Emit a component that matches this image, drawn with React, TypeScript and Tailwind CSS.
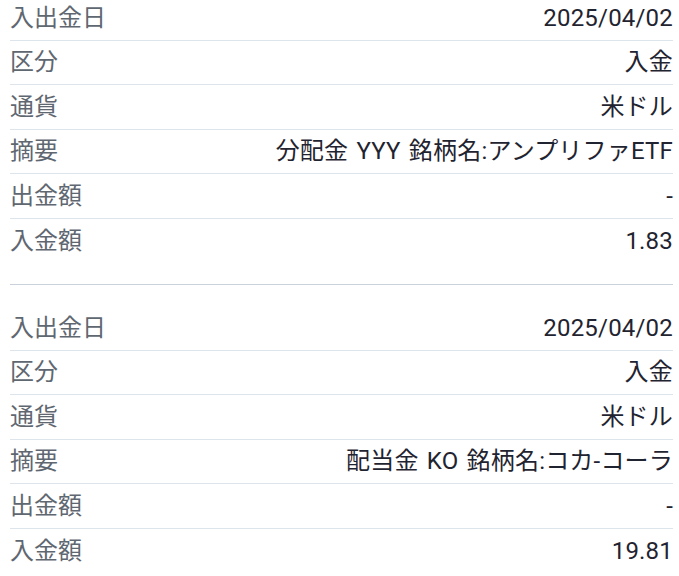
import React from "react";

type Row = { label: string; value: string };

const sections: Row[][] = [
  [
    { label: "入出金日", value: "2025/04/02" },
    { label: "区分", value: "入金" },
    { label: "通貨", value: "米ドル" },
    { label: "摘要", value: "分配金 YYY 銘柄名:アンプリファETF" },
    { label: "出金額", value: "-" },
    { label: "入金額", value: "1.83" },
  ],
  [
    { label: "入出金日", value: "2025/04/02" },
    { label: "区分", value: "入金" },
    { label: "通貨", value: "米ドル" },
    { label: "摘要", value: "配当金 KO 銘柄名:コカ-コーラ" },
    { label: "出金額", value: "-" },
    { label: "入金額", value: "19.81" },
  ],
];

export default function App() {
  return (
    <div
      className="w-[679px] h-[576px] overflow-hidden bg-white"
      style={{ fontFamily: 'Roboto, "Noto Sans CJK JP", sans-serif' }}
    >
      <div className="-mt-[25px] pl-[10px] pr-[6px]">
        {sections.map((rows, si) => (
          <div key={si} className="py-[21px] border-b border-[#c9d1db]">
            {rows.map((r, i) => (
              <div
                key={i}
                className={
                  "h-[44.5px] flex items-center justify-between text-[24px] leading-none " +
                  (i < rows.length - 1 ? "border-b border-[#dde4ec]" : "")
                }
              >
                <span className="text-[#5f6771]">{r.label}</span>
                <span className="text-[#1f2430] whitespace-nowrap [word-spacing:2px] tracking-[0.2px]">{r.value}</span>
              </div>
            ))}
          </div>
        ))}
      </div>
    </div>
  );
}
